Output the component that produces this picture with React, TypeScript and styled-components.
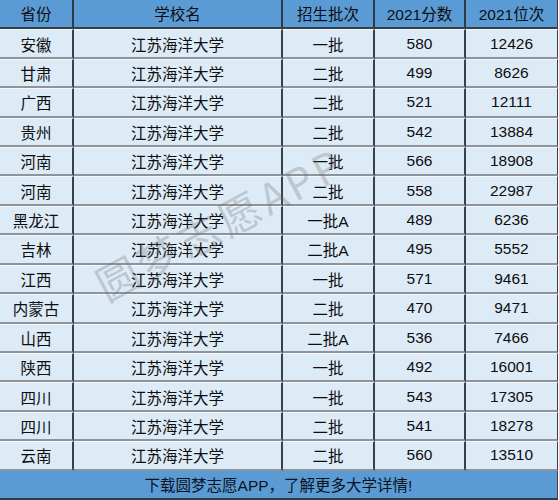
import React from 'react';
import styled, { createGlobalStyle } from 'styled-components';

const GlobalStyle = createGlobalStyle`
  html, body {
    margin: 0;
    padding: 0;
    background: #ffffff;
  }
  * {
    box-sizing: border-box;
  }
`;

const headers = ['省份', '学校名', '招生批次', '2021分数', '2021位次'];

const rows: [string, string, string, string][] = [
  ['安徽', '一批', '580', '12426'],
  ['甘肃', '二批', '499', '8626'],
  ['广西', '二批', '521', '12111'],
  ['贵州', '二批', '542', '13884'],
  ['河南', '一批', '566', '18908'],
  ['河南', '二批', '558', '22987'],
  ['黑龙江', '一批A', '489', '6236'],
  ['吉林', '二批A', '495', '5552'],
  ['江西', '一批', '571', '9461'],
  ['内蒙古', '二批', '470', '9471'],
  ['山西', '二批A', '536', '7466'],
  ['陕西', '一批', '492', '16001'],
  ['四川', '一批', '543', '17305'],
  ['四川', '二批', '541', '18278'],
  ['云南', '二批', '560', '13510'],
];

const App = () => {
  return (
    <>
      <GlobalStyle />
      <Wrapper>
        <Table>
          {headers.map((h, i) => (
            <HeadCell key={h} $last={i === headers.length - 1}>
              {h}
            </HeadCell>
          ))}
          {rows.map(([prov, batch, score, rank], r) => (
            <React.Fragment key={r}>
              <Cell>{prov}</Cell>
              <Cell>江苏海洋大学</Cell>
              <Cell>{batch}</Cell>
              <Cell>{score}</Cell>
              <Cell $last>{rank}</Cell>
            </React.Fragment>
          ))}
          <Footer>下载圆梦志愿APP，了解更多大学详情!</Footer>
        </Table>
        <Watermark>圆梦志愿APP</Watermark>
      </Wrapper>
    </>
  );
};

export default App;

const Wrapper = styled.div`
  position: relative;
  width: 559px;
  height: 500px;
  overflow: hidden;
`;

const Table = styled.div`
  display: grid;
  width: 558px;
  height: 500px;
  grid-template-columns: 74px 209px 92px 91px 92px;
  grid-template-rows: repeat(17, 1fr);
  font-family: 'Liberation Sans', 'Noto Sans CJK SC', sans-serif;
  font-size: 15.5px;
  color: #0e0e0e;
`;

const HeadCell = styled.div<{ $last?: boolean }>`
  display: flex;
  align-items: center;
  justify-content: center;
  background: #5b9bd5;
  border-right: ${(p) => (p.$last ? '1px' : '2px')} solid #2e3a45;
  border-bottom: 2px solid #34404a;
  padding-bottom: 1px;
`;

const Cell = styled.div<{ $last?: boolean }>`
  display: flex;
  align-items: center;
  justify-content: center;
  background: #ddebf7;
  border-top: 1px solid #f4f8fc;
  border-right: ${(p) => (p.$last ? '1px' : '2px')} solid #3a4148;
  border-bottom: 2px solid #8d949a;
`;

const Footer = styled.div`
  grid-column: 1 / -1;
  display: flex;
  align-items: center;
  justify-content: center;
  background: #5b9bd5;
  border-right: 1px solid #3a4148;
  border-bottom: 2px solid #2e3a45;
  font-size: 15.5px;
  color: #0b141c;
`;

const Watermark = styled.div`
  position: absolute;
  left: 98px;
  top: 256px;
  transform: rotate(-28deg);
  transform-origin: left center;
  font-family: 'Noto Sans CJK SC', sans-serif;
  font-size: 42px;
  letter-spacing: 4px;
  white-space: nowrap;
  color: rgba(110, 110, 110, 0.3);
  pointer-events: none;
`;
